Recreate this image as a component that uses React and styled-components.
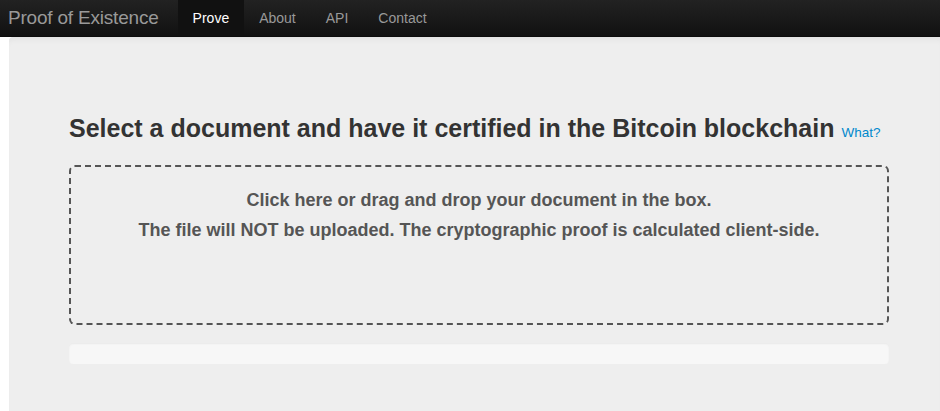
import React from 'react';
import styled, { createGlobalStyle } from 'styled-components';

const GlobalStyle = createGlobalStyle`
  html, body {
    margin: 0;
    padding: 0;
    background: #fff;
    font-family: "Liberation Sans", Arial, sans-serif;
    color: #333;
    overflow: hidden;
  }
`

const Page = styled.div`
  display: flex;
  flex-direction: column;
  height: 411px;
`

const Navbar = styled.div`
  display: flex;
  align-items: stretch;
  height: 37px;
  background: linear-gradient(to bottom, #222 0%, #111 100%);
  border-bottom: 1px solid #0c0c0c;
  box-sizing: border-box;
`

const Brand = styled.a`
  display: flex;
  align-items: center;
  padding: 0 19px 0 8px;
  font-size: 19px;
  font-weight: 300;
  color: #999;
  text-decoration: none;
  letter-spacing: -0.2px;
`

const NavItem = styled.a`
  display: flex;
  align-items: center;
  padding: 0 15px;
  font-size: 14px;
  color: ${p => (p.$active ? '#fff' : '#999')};
  background: ${p => (p.$active ? '#111' : 'transparent')};
  text-decoration: none;
`

const Main = styled.div`
  flex: 1;
  display: flex;
  padding-left: 9px;
`

const Hero = styled.div`
  flex: 1;
  background: #eee;
  border-top-left-radius: 4px;
  box-shadow: inset 0 6px 6px -4px rgba(0, 0, 0, 0.06);
  padding: 76px 51px 0 60px;
  display: flex;
  flex-direction: column;
`

const Title = styled.h1`
  margin: 0;
  font-size: 25px;
  font-weight: bold;
  color: #333;
  line-height: 30px;
  height: 30px;
  white-space: nowrap;
`

const WhatLink = styled.a`
  margin-left: 7px;
  font-size: 13.5px;
  font-weight: normal;
  color: #0088cc;
  text-decoration: none;
`

const DropBox = styled.div`
  margin-top: 22px;
  height: 160px;
  box-sizing: border-box;
  border: 2px dashed #555;
  border-radius: 6px;
  padding-top: 18px;
  display: flex;
  flex-direction: column;
  align-items: center;
  cursor: pointer;
`

const DropLine = styled.p`
  margin: 0;
  font-size: 18px;
  font-weight: bold;
  color: #555;
  line-height: 30px;
`

const Progress = styled.div`
  margin-top: 18px;
  height: 21px;
  background: #f7f7f7;
  border-radius: 4px;
  box-shadow: inset 0 1px 2px rgba(0, 0, 0, 0.06);
`

const App = () => {
  return (
    <Page>
      <GlobalStyle />
      <Navbar>
        <Brand href="#">Proof of Existence</Brand>
        <NavItem href="#" $active>Prove</NavItem>
        <NavItem href="#">About</NavItem>
        <NavItem href="#">API</NavItem>
        <NavItem href="#">Contact</NavItem>
      </Navbar>
      <Main>
        <Hero>
          <Title>
            Select a document and have it certified in the Bitcoin blockchain
            <WhatLink href="#">What?</WhatLink>
          </Title>
          <DropBox>
            <DropLine>Click here or drag and drop your document in the box.</DropLine>
            <DropLine>The file will NOT be uploaded. The cryptographic proof is calculated client-side.</DropLine>
          </DropBox>
          <Progress />
        </Hero>
      </Main>
    </Page>
  )
}

export default App
